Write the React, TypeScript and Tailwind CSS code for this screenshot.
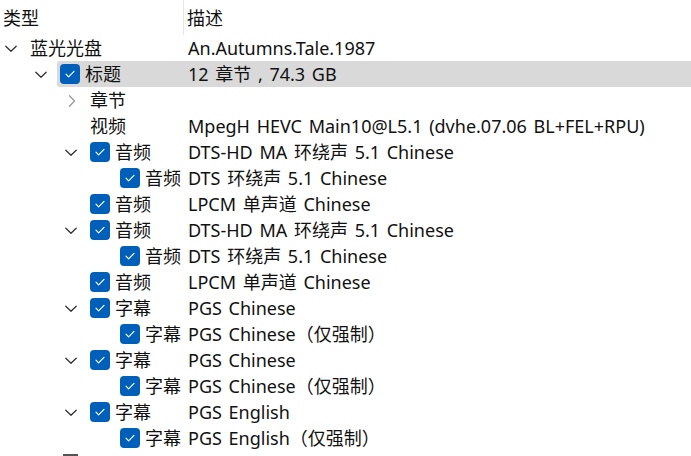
type Row = {
  level: 0 | 1 | 2 | 3;
  chevron?: "down" | "right";
  checked?: boolean;
  label: string;
  desc: string;
  selected?: boolean;
};

const rows: Row[] = [
  { level: 0, chevron: "down", label: "蓝光光盘", desc: "An.Autumns.Tale.1987" },
  { level: 1, chevron: "down", checked: true, label: "标题", desc: "12 章节 , 74.3 GB", selected: true },
  { level: 2, chevron: "right", label: "章节", desc: "" },
  { level: 2, label: "视频", desc: "MpegH HEVC Main10@L5.1 (dvhe.07.06 BL+FEL+RPU)" },
  { level: 2, chevron: "down", checked: true, label: "音频", desc: "DTS-HD MA 环绕声 5.1 Chinese" },
  { level: 3, checked: true, label: "音频", desc: "DTS 环绕声 5.1 Chinese" },
  { level: 2, checked: true, label: "音频", desc: "LPCM 单声道 Chinese" },
  { level: 2, chevron: "down", checked: true, label: "音频", desc: "DTS-HD MA 环绕声 5.1 Chinese" },
  { level: 3, checked: true, label: "音频", desc: "DTS 环绕声 5.1 Chinese" },
  { level: 2, checked: true, label: "音频", desc: "LPCM 单声道 Chinese" },
  { level: 2, chevron: "down", checked: true, label: "字幕", desc: "PGS Chinese" },
  { level: 3, checked: true, label: "字幕", desc: "PGS Chinese（仅强制）" },
  { level: 2, chevron: "down", checked: true, label: "字幕", desc: "PGS Chinese" },
  { level: 3, checked: true, label: "字幕", desc: "PGS Chinese（仅强制）" },
  { level: 2, chevron: "down", checked: true, label: "字幕", desc: "PGS English" },
  { level: 3, checked: true, label: "字幕", desc: "PGS English（仅强制）" },
];

// left gutter (indent + chevron slot) and the width left for the name column
const gutter = ["w-[27px] pl-[5px]", "w-[57px] pl-[35px]", "w-[87px] pl-[65px]", "w-[117px] pl-[95px]"];
const nameCol = ["w-[154px]", "w-[124px]", "w-[94px]", "w-[64px]"];

function Check() {
  return (
    <div className="w-5 h-5 rounded-[4px] bg-[#005fb8] flex items-center justify-center shrink-0 mr-[5px]">
      <svg width="20" height="20" viewBox="0 0 20 20" fill="none">
        <path d="M6 10.2 L8.6 12.8 L14 7.4" stroke="white" strokeWidth="1.2" strokeLinecap="round" strokeLinejoin="round" />
      </svg>
    </div>
  );
}

function ChevDown() {
  return (
    <svg width="12" height="8" viewBox="0 0 12 8" fill="none" className="mt-[2px]">
      <path d="M0.8 1.2 L6 6.2 L11.2 1.2" stroke="#333" strokeWidth="1.3" strokeLinecap="round" strokeLinejoin="round" />
    </svg>
  );
}

function ChevRight() {
  return (
    <svg width="8" height="12" viewBox="0 0 8 12" fill="none" className="ml-[3px] mt-[1px]">
      <path d="M1.5 0.8 L6.5 6 L1.5 11.2" stroke="#999" strokeWidth="1.3" strokeLinecap="round" strokeLinejoin="round" />
    </svg>
  );
}

function TreeRow({ row }: { row: Row }) {
  return (
    <div className="flex h-[26px] items-center">
      <div className={`${gutter[row.level]} h-full flex items-center shrink-0`}>
        {row.chevron === "down" && <ChevDown />}
        {row.chevron === "right" && <ChevRight />}
      </div>
      <div className={`flex-1 h-full flex items-center pl-[3px] rounded-l-[3px] ${row.selected ? "bg-[#d9d9d9]" : ""}`}>
        <div className={`${nameCol[row.level]} flex items-center shrink-0 whitespace-nowrap`}>
          {row.checked && <Check />}
          <span>{row.label}</span>
        </div>
        <div className="pl-[4px] whitespace-nowrap [word-spacing:2px]">{row.desc}</div>
      </div>
    </div>
  );
}

export default function App() {
  return (
    <div
      className="w-[691px] h-[456px] overflow-hidden bg-white text-[18px] text-[#111] leading-none"
      style={{ fontFamily: '"Noto Sans", "Noto Sans CJK SC", sans-serif' }}
    >
      {/* Header */}
      <div className="flex h-[35px] items-stretch">
        <div className="w-[184px] flex items-center pl-[3px] border-r border-[#e5e5e5] shrink-0">类型</div>
        <div className="flex items-center pl-[3px]">描述</div>
      </div>

      {rows.map((r, i) => (
        <TreeRow key={i} row={r} />
      ))}

      <div className="ml-[63px] mt-[3px] w-[15px] h-[2px] bg-[#555]" />
    </div>
  );
}
